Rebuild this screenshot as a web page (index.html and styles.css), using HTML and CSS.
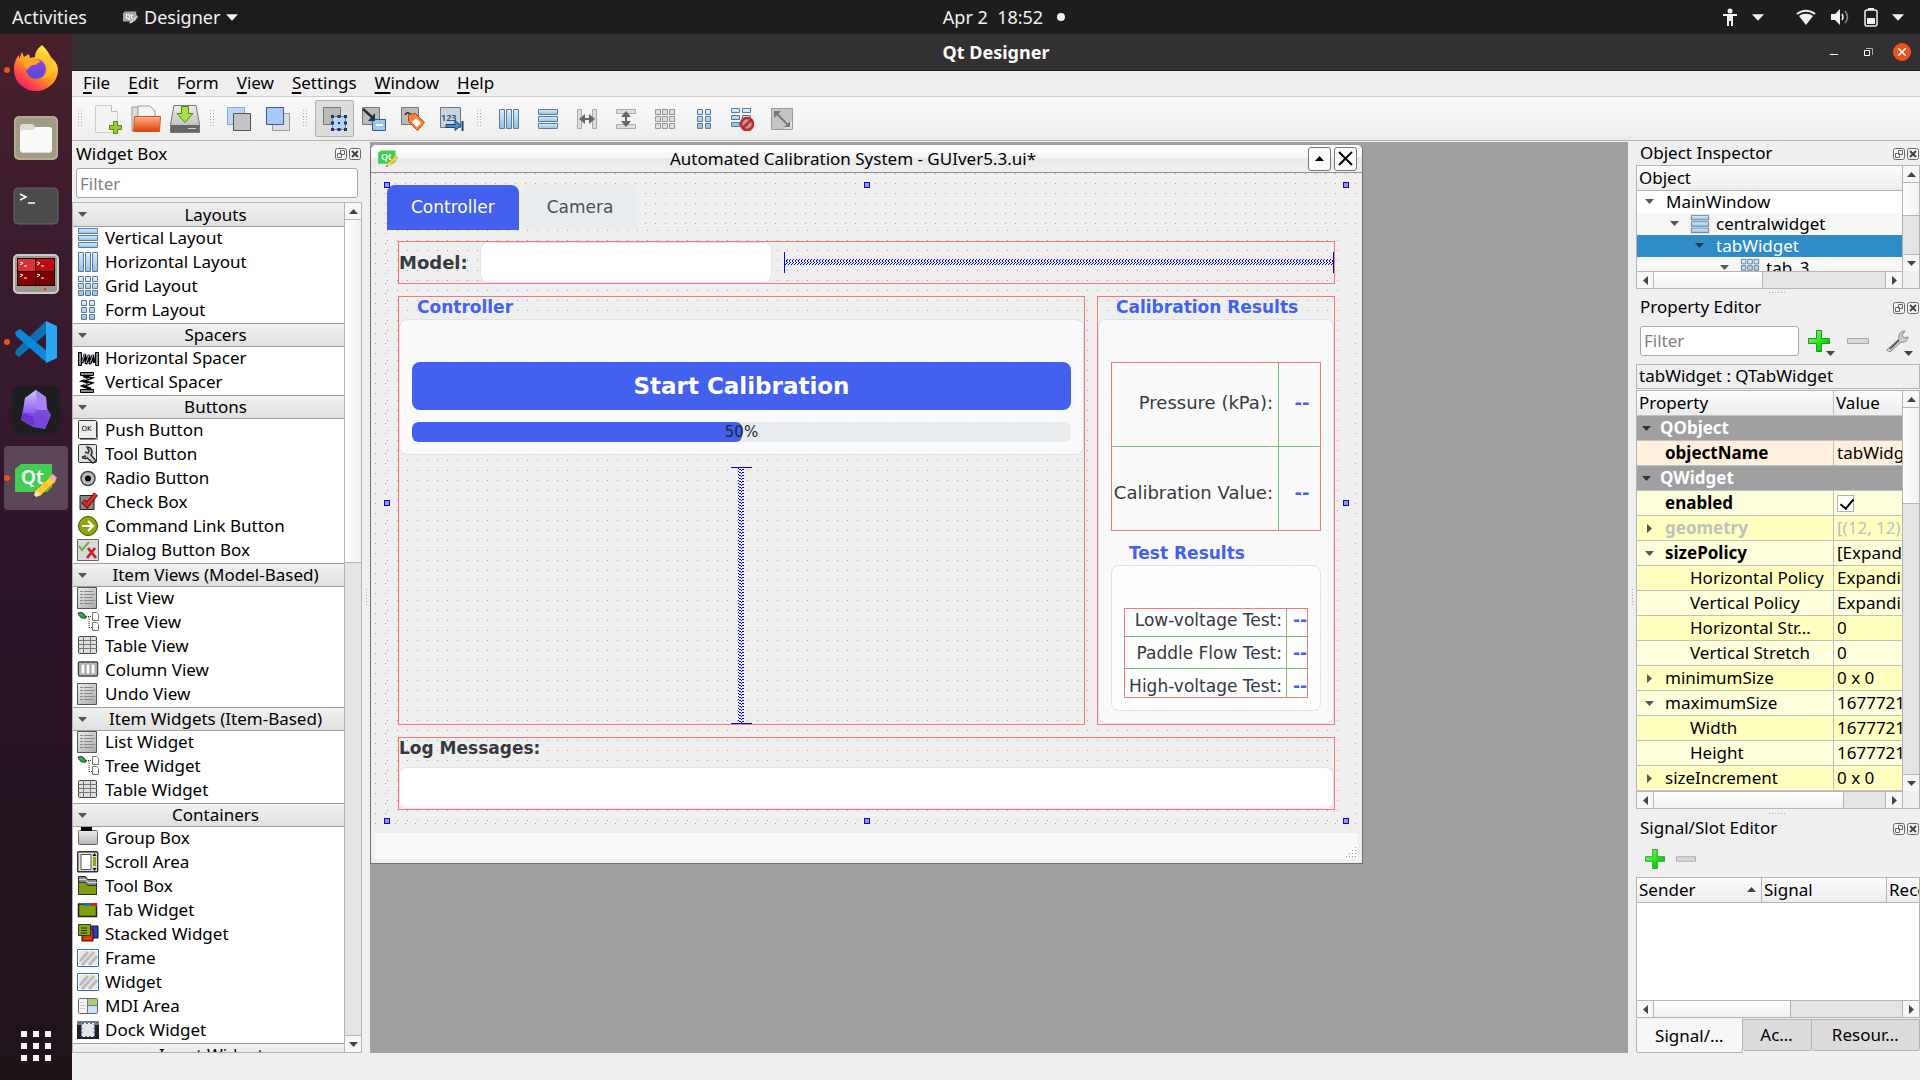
FILE: index.html
```html
<!DOCTYPE html>
<html lang="en">
<head>
<meta charset="utf-8">
<title>Qt Designer</title>
<link rel="stylesheet" href="styles.css">
</head>
<body>
<svg class="paints" aria-hidden="true">
  <defs>
    <linearGradient id="blue" x2="0" y2="1"><stop offset="0" stop-color="#d9efff"/><stop offset="1" stop-color="#8fc0e8"/></linearGradient>
    <linearGradient id="gray" x2="1" y2="1"><stop offset="0" stop-color="#eee"/><stop offset="1" stop-color="#aaa"/></linearGradient>
    <linearGradient id="green" x2="1" y2="1"><stop offset="0" stop-color="#9f9"/><stop offset=".6" stop-color="#1edc14"/><stop offset="1" stop-color="#0b0"/></linearGradient>
    <linearGradient id="orange" x2="0" y2="1"><stop offset="0" stop-color="#ffb08a"/><stop offset="1" stop-color="#e04008"/></linearGradient>
    <linearGradient id="steel" x2="0" y2="1"><stop offset="0" stop-color="#eee"/><stop offset="1" stop-color="#b4b4b4"/></linearGradient>
    <linearGradient id="fox" x2="0" y2="1" x1=".7"><stop offset="0" stop-color="#fff044"/><stop offset=".45" stop-color="#ff9a20"/><stop offset=".75" stop-color="#ff3750"/><stop offset="1" stop-color="#e5127e"/></linearGradient>
    <linearGradient id="globe" x2="0" y2="1"><stop offset="0" stop-color="#a03ee0"/><stop offset="1" stop-color="#4a50d8"/></linearGradient>
    <linearGradient id="gem" x2="0" y2="1"><stop offset="0" stop-color="#d4c2fb"/><stop offset="1" stop-color="#8b5cf6"/></linearGradient>
    <pattern id="coil-h" y="7" width="3" height="6" patternUnits="userSpaceOnUse"><path d="M2 0h1v1h-1zM1 1h1v1h-1zM1 2h1v1h-1zM2 3h1v1h-1zM1 4h1v1h-1zM0 5h1v1h-1z" fill="#00f"/></pattern>
    <pattern id="coil-v" x="7" width="6" height="3" patternUnits="userSpaceOnUse"><path d="M0 0h1v1h-1zM1 1h2v1h-2zM3 2h1v1h-1zM4 1h2v1h-2z" fill="#00f"/></pattern>
  </defs>
</svg>
<svg class="sprite" aria-hidden="true">
  <symbol id="down" viewBox="0 0 9 5"><path d="M0 0h9L4.500 5z" fill="currentColor"/></symbol>
  <symbol id="up" viewBox="0 0 9 5"><path d="M0 5h9L4.500 0z" fill="currentColor"/></symbol>
  <symbol id="left" viewBox="0 0 5 9"><path d="M5 0v9L0 4.500z" fill="currentColor"/></symbol>
  <symbol id="right" viewBox="0 0 5 9"><path d="M0 0v9L5 4.500z" fill="currentColor"/></symbol>
  <symbol id="float" viewBox="0 0 12 12"><rect x=".5" y=".5" width="11" height="11" rx="2" fill="#f6f6f6" stroke="#666"/><path d="M5.500 2.500h4v4h-4zM2.500 5.500h4v4h-4z" fill="#f6f6f6" stroke="#666"/></symbol>
  <symbol id="shut" viewBox="0 0 12 12"><rect x=".5" y=".5" width="11" height="11" rx="2" fill="#f6f6f6" stroke="#666"/><path d="M3 3l6 6M9 3l-6 6" stroke="#444" stroke-width="2"/></symbol>
  <symbol id="vlay" viewBox="0 0 22 22"><g fill="url(#blue)" stroke="#5f7a96"><path d="M1.500 1.500h19v5h-19z"/><path d="M1.500 8.500h19v5h-19z"/><path d="M1.500 15.500h19v5h-19z"/></g></symbol>
  <symbol id="hlay" viewBox="0 0 22 22"><g fill="url(#blue)" stroke="#5f7a96"><path d="M1.500 1.500h5v19h-5z"/><path d="M8.500 1.500h5v19h-5z"/><path d="M15.500 1.500h5v19h-5z"/></g></symbol>
  <symbol id="glay" viewBox="0 0 22 22"><path fill="url(#blue)" stroke="#5f7a96" d="M1.500 1.500h5v5h-5zM8.500 1.500h5v5h-5zM15.500 1.500h5v5h-5zM1.500 8.500h5v5h-5zM8.500 8.500h5v5h-5zM15.500 8.500h5v5h-5zM1.500 15.500h5v5h-5zM8.500 15.500h5v5h-5zM15.500 15.500h5v5h-5z"/></symbol>
  <symbol id="flay" viewBox="0 0 22 22"><path fill="url(#blue)" stroke="#5f7a96" d="M4.500 1.500h5v5h-5zM12.500 1.500h5v5h-5zM4.500 8.500h5v5h-5zM12.500 8.500h5v5h-5zM4.500 15.500h5v5h-5zM12.500 15.500h5v5h-5z"/></symbol>
  <symbol id="hsp" viewBox="0 0 22 22"><path d="M1.500 5.500h3v13h-3zM18.500 5.500h3v13h-3z" fill="#888" stroke="#000"/><path d="M5 16l3-9 1 10 3-9 1 9 3-9 1 8" fill="none" stroke="#000" stroke-width="2.500"/><path d="M5 15l3-8M9 16l3-8M13 16l3-8" stroke="#9bd"/></symbol>
  <symbol id="vsp" viewBox="0 0 22 22"><path d="M3.500 1.500h13v3h-13zM3.500 18.500h13v3h-13z" fill="#888" stroke="#000"/><path d="M6 5l8 2-8 3 8 2-8 3 8 3" fill="none" stroke="#000" stroke-width="2.500"/><path d="M7 9l6-2M7 14l6-2" stroke="#9bd"/></symbol>
  <symbol id="push" viewBox="0 0 22 22"><rect x="1.500" y="1.500" width="18" height="18" rx="1" fill="#eee" stroke="#333"/><path d="M20.500 3v17.500H3" fill="none" stroke="#888"/><text x="4.500" y="12" font-size="7" font-family="DejaVu Sans">OK</text></symbol>
  <symbol id="tool" viewBox="0 0 22 22"><rect x="1.500" y="1.500" width="18" height="18" rx="1" fill="#e4e4e4" stroke="#333"/><path d="M5 14a4 4 0 0 0 5 1l6 5 3-2-5-6a5 5 0 0 0-4-8l2 4-1 2-3-1M5 14l4-1" fill="#ccc" stroke="#333" stroke-width="1.500"/></symbol>
  <symbol id="radio" viewBox="0 0 22 22"><circle cx="11" cy="11.500" r="7" fill="#bbb" stroke="#444" stroke-width="1.500"/><circle cx="11" cy="11.500" r="3" fill="#000"/></symbol>
  <symbol id="check" viewBox="0 0 22 22"><path d="M3 4.500h14v14H3z" fill="#888" stroke="#222"/><path d="M6 10l4 4L19 3" fill="none" stroke="#700" stroke-width="5"/><path d="M6 10l4 4L19 3" fill="none" stroke="#e02a2a" stroke-width="3"/></symbol>
  <symbol id="cmd" viewBox="0 0 22 22"><circle cx="11" cy="11" r="9.500" fill="#8aa80c" stroke="#3d4a05"/><path d="M5 11h10M11 6l5 5-5 5" fill="none" stroke="#fff" stroke-width="2.200"/></symbol>
  <symbol id="dlg" viewBox="0 0 22 22"><path d="M.5.500h21v21H.500z" fill="#d9d9d9" stroke="#666"/><path d="M2 7l3 4 7-8" fill="none" stroke="#5cb531" stroke-width="2"/><path d="M11 9l8 10M18 9l-8 10" stroke="#c8202a" stroke-width="2.800"/></symbol>
  <symbol id="list" viewBox="0 0 22 22"><path d="M.5.500h19v21H.500z" fill="url(#gray)" stroke="#555"/><path d="M3 4.500h3m1 0h9M3 7.500h3m1 0h11M3 10.500h3m1 0h9M3 13.500h3m1 0h11M3 16.500h3m1 0h9" stroke="#888"/></symbol>
  <symbol id="tree" viewBox="0 0 22 22"><path d="M1 2c4-2 7 1 8 5-4 1-7-1-8-5z" fill="#3a9d4c" stroke="#153"/><path d="M9 5.500h6M12 6v11M12 16.500h4" stroke="#333" stroke-dasharray="1 1"/><path d="M15.500 1.500h4l2 2v6h-6zM15.500 11.500h4l2 2v6h-6z" fill="#fff" stroke="#777"/></symbol>
  <symbol id="table" viewBox="0 0 22 22"><rect x="1.500" y="1.500" width="18" height="17" rx="1" fill="#ddd" stroke="#444"/><path d="M1 5.500h19M1 9.500h19M1 13.500h19M6.500 1v18M13.500 1v18" stroke="#777"/></symbol>
  <symbol id="cols" viewBox="0 0 22 22"><rect x="1.500" y="3" width="19" height="14" rx="1" fill="#ccc" stroke="#444" stroke-width="1.500"/><path d="M4 5h4v10H4zM9 5h4v10H9zM14 5h4v10h-4z" fill="#fff" stroke="#777" stroke-width=".7"/></symbol>
  <symbol id="group" viewBox="0 0 22 22"><rect x="1.500" y="3.500" width="19" height="14" rx="1" fill="url(#steel)" stroke="#666"/><path d="M4 0h11v4H4z" fill="#000"/></symbol>
  <symbol id="scroll" viewBox="0 0 22 22"><rect x=".7" y=".7" width="20" height="20" rx="1" fill="#ddd" stroke="#333" stroke-width="1.400"/><path d="M4 3.500h10v15H4z" fill="#fff" stroke="#555"/><path d="M16 6h3v9h-3z" fill="#8aa80c"/><path d="M15.500 5l2-3 2 3zM15.500 17l2 3 2-3z"/></symbol>
  <symbol id="tbox" viewBox="0 0 22 22"><path d="M1.500 19.500v-18h7l2 3h9v15z" fill="#888" stroke="#222"/><path d="M1.500 19.500v-12h7l2 3h9v9z" fill="#7f9f0e" stroke="#333"/><path d="M2 4.500h7l2 3h9" fill="none" stroke="#ddd"/></symbol>
  <symbol id="tabw" viewBox="0 0 22 22"><path d="M1.500 5h18v12.500h-18z" fill="#7f9f0e" stroke="#222" stroke-width="1.500"/><path d="M7 4h6v3H7z" fill="#17c"/><path d="M14 4h6v3h-6z" fill="#d22"/></symbol>
  <symbol id="stack" viewBox="0 0 22 22"><path d="M13 3h8v12h-8z" fill="#24c" stroke="#013"/><path d="M5 6h11v12H5z" fill="#c40" stroke="#400"/><path d="M1.500 1.500h12v11h-12z" fill="#8aa80c" stroke="#333"/><path d="M4 5h6M4 7.500h6M4 10h6" stroke="#230"/></symbol>
  <symbol id="frame" viewBox="0 0 22 22"><path d="M.5 2.500h21v17H.500z" fill="#fff" stroke="#2b71c7"/><path d="M2 4h18v14H2z" fill="#e9e9e9"/><path d="M3 14l8-9M5 18L17 5M12 18l8-9" stroke="#bbb" stroke-width="3"/></symbol>
  <symbol id="mdi" viewBox="0 0 22 22"><rect x="1.500" y="3.500" width="19" height="15" rx="1" fill="#f4f4f4" stroke="#666"/><path d="M11 4h9v6h-9z" fill="#a5d27a"/><path d="M11 11h9v7h-9z" fill="#cfe0f7"/><path d="M10.500 4v14M11 10.500h9" stroke="#777"/><path d="M3 7.500h4M3 10.500h6M3 13.500h5" stroke="#ccc"/></symbol>
  <symbol id="dockw" viewBox="0 0 22 22"><path d="M0 2h22v18H0z" fill="#222"/><path d="M0 2h22v4H0z" fill="#777"/><path d="M5 4.500h12v13H5z" fill="#e5e5e5" stroke="#fff"/><path d="M5 4.500h12v13H5z" fill="none" stroke="#2b71c7" stroke-dasharray="2 2"/></symbol>
  <symbol id="qt" viewBox="0 0 42 36"><path d="M6 1h31v23l-5 5H0V6z" fill="#41cd52"/><text x="6" y="21" font-family="Noto Sans" font-size="19" font-weight="600" fill="#fff">Qt</text><path d="M18 35l3-8 15-14 5 5-15 14z" fill="#fc3" stroke="#b80" stroke-width=".7"/><path d="M34 14l4-3 4 4-3 4z" fill="#e3b4b4"/><path d="M18 35l3-8 5 5z" fill="#f6e3bd"/><path d="M17 36l2-4 2 2z" fill="#333"/></symbol>
  <symbol id="plus" viewBox="0 0 22 22"><path d="M8.500.500h5v8h8v5h-8v8h-5v-8h-8v-5h8z" fill="url(#green)" stroke="#189c18"/></symbol>
  <symbol id="minus" viewBox="0 0 22 22"><path d="M.5 8.500h21v5H.500z" fill="#d8d8d8" stroke="#aaa"/></symbol>
  <symbol id="wrench" viewBox="0 0 24 24"><path d="M1.500 21L14 10c-1-5 2-8 6-8l-3 4 2 3 4-1c0 4-4 6-7 5L5 23z" fill="#ccc" stroke="#888"/><path d="M5 20L14 11" stroke="#444" stroke-width="1.500"/></symbol>
  <symbol id="new" viewBox="0 0 30 30"><path d="M3.500 1.500h16l6 6v21h-22z" fill="#f3f3f3" stroke="#ccc"/><path d="M19.500 1.500v6h6" fill="#fff" stroke="#bbb"/><path d="M21.500 17.500h4v4h4v4h-4v4h-4v-4h-4v-4h4z" fill="#9c3" stroke="#4e8a06"/></symbol>
  <symbol id="open" viewBox="0 0 30 30"><path d="M1 27V3h8l2 4h12v20z" fill="#ddd" stroke="#999"/><path d="M7 14V2h12l5 5v7z" fill="#f5f5f5" stroke="#999"/><path d="M3.500 12.500h26l-1 15h-26z" fill="url(#orange)" stroke="#d4571f"/></symbol>
  <symbol id="save" viewBox="0 0 30 30"><path d="M4 1.500h22l3.500 19v8h-29v-8z" fill="url(#steel)" stroke="#777"/><path d="M1 21h28v7H1z" fill="#666"/><path d="M18 24.500h8" stroke="#ccc"/><path d="M11.500 2.500h7v7h4.500l-8 9-8-9h4.500z" fill="#a6e04a" stroke="#4e8a06"/></symbol>
  <symbol id="back" viewBox="0 0 24 24"><path d="M.5.500h17v17H.500z" fill="#bfd6fb" stroke="#8ba2cc"/><path d="M6.500 6.500h17v17h-17z" fill="#c4c4c4" stroke="#555"/></symbol>
  <symbol id="front" viewBox="0 0 24 24"><path d="M6.500 6.500h17v17h-17z" fill="#ddd" stroke="#999"/><path d="M.5.500h17v17H.500z" fill="#a6c9fa" stroke="#3d5a90"/></symbol>
  <symbol id="editw" viewBox="0 0 24 24"><path d="M.5.500h17v17H.500z" fill="#bbb" stroke="#777"/><path d="M9.500 9.500h13v13h-13z" fill="#b9d4fb" stroke="#6c8ab8"/><path d="M8 8h3v3H8zM14.500 8h3v3h-3zM21 8h3v3h-3zM8 14.500h3v3H8zM21 14.500h3v3h-3zM8 21h3v3H8zM14.500 21h3v3h-3zM21 21h3v3h-3zM15 15h2v2h-2z" fill="#1d3557"/></symbol>
  <symbol id="sig" viewBox="0 0 24 24"><path d="M.5.500h17v17H.500z" fill="#bbb" stroke="#777"/><path d="M10.500 12.500h13v11h-13z" fill="#9fc4f8" stroke="#3d5a90"/><path d="M14 17h7v2h-7z" fill="#fff"/><path d="M1 2l10 9" stroke="#234" stroke-width="2.500"/><path d="M13 6v8H6z" fill="#234"/></symbol>
  <symbol id="buddy" viewBox="0 0 24 24"><path d="M.5.500h17v17H.500z" fill="#bbb" stroke="#777"/><path d="M4 8c2-4 5-2 7 1" fill="none" stroke="#222" stroke-width="1.500"/><path d="M7.500 7.500l7-1 9 9-7 8-9-9z" fill="#f5843a" stroke="#a4480f"/><path d="M15 11l5 5-4 4-5-5z" fill="#fff"/></symbol>
  <symbol id="tabo" viewBox="0 0 24 24"><path d="M.5.500h20v20H.500z" fill="#ccd3dc" stroke="#678"/><text x="1" y="14" font-family="Noto Sans" font-size="9" font-weight="600" fill="#1d4f91">123</text><path d="M6 17.500h9v-4l6 5-6 5v-3H6z" fill="#4f8ad0" stroke="#1d3f70"/><path d="M22.500 14v10" stroke="#1d3f70" stroke-width="2"/></symbol>
  <symbol id="hsplit" viewBox="0 0 22 22"><path d="M1.500 1.500h4v19h-4zM16.500 1.500h4v19h-4z" fill="#ddd" stroke="#aaa"/><path d="M3 11l6-5v4h4V6l6 5-6 5v-4H9v4z" fill="#666"/></symbol>
  <symbol id="vsplit" viewBox="0 0 22 22"><path d="M1.500 1.500h19v4h-19zM1.500 16.500h19v4h-19z" fill="#ddd" stroke="#aaa"/><path d="M11 3l5 6h-4v4h4l-5 6-5-6h4V9H6z" fill="#666"/></symbol>
  <symbol id="ggray" viewBox="0 0 22 22"><path fill="#ddd" stroke="#999" d="M1.500 1.500h5v5h-5zM8.500 1.500h5v5h-5zM15.500 1.500h5v5h-5zM1.500 8.500h5v5h-5zM8.500 8.500h5v5h-5zM15.500 8.500h5v5h-5zM1.500 15.500h5v5h-5zM8.500 15.500h5v5h-5zM15.500 15.500h5v5h-5z"/></symbol>
  <symbol id="break" viewBox="0 0 24 24"><path d="M.5 1.500h8v4h-8zM11.500 1.500h8v4h-8zM.5 8.500h8v4h-8zM11.500 8.500h8v4h-8zM.5 15.500h8v4h-8z" fill="url(#blue)" stroke="#5f7a96"/><circle cx="16" cy="17" r="6" fill="#b99" stroke="#c1272d" stroke-width="2.500"/><path d="M12 21l8-8" stroke="#c1272d" stroke-width="2.500"/></symbol>
  <symbol id="adjust" viewBox="0 0 22 22"><path d="M.5.500h21v21H.500z" fill="#c4c4c4" stroke="#999"/><path d="M14 13h7v8h-7z" fill="#ddd"/><path d="M5 5l13 13" stroke="#777" stroke-width="2"/><path d="M3 3h7l-7 7zM19 19h-6l6-6z" fill="#777"/></symbol>
</svg>

<div class="desktop">
  <header class="topbar">
    <nav class="topbar-left">
      <button>Activities</button>
      <button class="app-menu"><svg class="mono" width="15" height="13"><use href="#qt"/></svg>Designer<svg class="caret" width="12" height="7"><use href="#down"/></svg></button>
    </nav>
    <button class="clock"><time>Apr 2&nbsp; 18:52</time><span class="notice"></span></button>
    <div class="tray">
      <svg width="16" height="18" viewBox="0 0 16 18"><circle cx="8" cy="3" r="2.500" fill="#f2f2f2"/><path d="M1 6h14v2h-4v10H9v-5H7v5H5V8H1z" fill="#f2f2f2"/></svg>
      <svg class="caret first" width="12" height="7"><use href="#down"/></svg>
      <svg width="20" height="16" viewBox="0 0 20 16"><path d="M1 5a14 14 0 0 1 18 0" fill="none" stroke="#f2f2f2" stroke-width="2"/><path d="M3 7c4-3 10-3 14 0l-7 9z" fill="#f2f2f2"/></svg>
      <svg width="20" height="18" viewBox="0 0 20 18"><path d="M1 6h4l5-5v16l-5-5H1z" fill="#f2f2f2"/><path d="M12 6q2 3 0 6" fill="none" stroke="#f2f2f2" stroke-width="1.500"/><path d="M15 3q5 6 0 12" fill="none" stroke="#888" stroke-width="1.500"/></svg>
      <svg width="14" height="19" viewBox="0 0 14 19"><rect x="1" y="2" width="12" height="16" rx="2" fill="none" stroke="#f2f2f2" stroke-width="1.500"/><path d="M4 0h6v2H4zM3 10h8v6H3z" fill="#f2f2f2"/></svg>
      <svg class="caret" width="12" height="7"><use href="#down"/></svg>
    </div>
  </header>

  <aside class="launcher">
    <button class="running" aria-label="Firefox"><svg class="raised" width="46" height="46" viewBox="0 0 46 46"><path d="M29 0c5 5 8 9 9 13 5 3 7 8 7 12a22 21 0 0 1-44 0C1 18 3 13 6 10v4l3-7 2 5 5-3 1 4 5-1c0-5 3-9 7-12z" fill="url(#fox)"/><circle cx="23" cy="24" r="10" fill="url(#globe)"/><path d="M6 14c4-2 8-1 11 2 4-3 9-2 11 1-4 0-3 3-7 3-3 0-5 2-7 5-2-4-5-7-8-11z" fill="#ffa523"/><path d="M31 12c7 7 4 18-2 22 9-1 14-9 12-18-2-5-8-8-10-4z" fill="#ffc52e" opacity=".7"/></svg></button>
    <button aria-label="Files"><svg width="46" height="46" viewBox="0 0 46 46"><rect x="1" y="1" width="44" height="44" rx="5" fill="#a19a84"/><rect x="2" y="2" width="42" height="42" rx="4" fill="none" stroke="#c1bba8"/><path d="M7 34V12q0-3 3-3h8q3 0 4 3h14q3 0 3 3v19q0 4-3 4H10q-3 0-3-4z" fill="#dfdccf"/><path d="M7 18q0-3 3-3h10l3-3h13q3 0 3 3v19q0 3-3 3H10q-3 0-3-3z" fill="#fafafa"/></svg></button>
    <button aria-label="Terminal"><svg width="46" height="38" viewBox="0 0 46 38"><rect x="1" y="1" width="44" height="36" rx="4" fill="#4b4b4b" stroke="#666"/><path d="M7 7l6 3-6 3M15 16h7" fill="none" stroke="#fff" stroke-width="1.500"/></svg></button>
    <button aria-label="Terminator"><svg width="46" height="40" viewBox="0 0 46 40"><rect x="1" y="1" width="44" height="38" rx="4" fill="#999b93" stroke="#cdcec9" stroke-width="2"/><path d="M4 4h38v28H4z" fill="#200"/><path d="M5 5h17v12H5z" fill="#d83333"/><path d="M23 5h18v12H23z" fill="#c00a10"/><path d="M5 18h17v13H5z" fill="#8b0000"/><path d="M23 18h18v13H23z" fill="#780000"/><path d="M7 8l3 1-3 2M24 8l3 1-3 2M7 20l3 1-3 2M24 20l3 1-3 2M11 12h3M28 12h3M11 24h3M28 24h3" fill="none" stroke="#fff"/><circle cx="32" cy="35" r="1" fill="red"/></svg></button>
    <button class="running" aria-label="Visual Studio Code"><svg width="44" height="44" viewBox="0 0 44 44"><path d="M32 1L7 25l-5 5-1 4 4 3L33 13z" fill="#0f6fb3"/><path d="M1 12l5-3 27 22v12L2 16z" fill="#0c88d8"/><path d="M32 1l11 5v32l-11 5z" fill="#2aa7f2"/></svg></button>
    <button aria-label="Obsidian"><svg width="48" height="48" viewBox="0 0 48 48"><rect width="48" height="48" rx="9" fill="#1e1e1e"/><path d="M24 4l10 7 1 11 4 7-6 14-12-2-12-7 4-22z" fill="#7c4ddb"/><path d="M24 4l-11 8-2 15 12 0 4-9z" fill="url(#gem)"/><path d="M24 4l10 7 1 13-10 0z" fill="#a782f3"/><path d="M9 32l3-5 10 4 1 9-8-2z" fill="#6a35cc"/><path d="M23 27h12l4 2-6 14-10-3z" fill="#7548d8"/></svg></button>
    <button class="running active" aria-label="Qt Designer"><svg width="42" height="36"><use href="#qt"/></svg></button>
    <button class="apps" aria-label="Show Applications"><svg width="30" height="30" viewBox="0 0 30 30"><path d="M0 0h6v6H0zM12 0h6v6h-6zM24 0h6v6h-6zM0 12h6v6H0zM12 12h6v6h-6zM24 12h6v6h-6zM0 24h6v6H0zM12 24h6v6h-6zM24 24h6v6h-6z" fill="#f5f5f5"/></svg></button>
  </aside>

  <main class="app">
    <div class="titlebar">
      <h1>Qt Designer</h1>
      <div class="window-buttons">
        <button aria-label="Minimize"><svg width="8" height="12" viewBox="0 0 8 12"><path d="M0 8.500h8" stroke="#fff"/></svg></button>
        <button aria-label="Restore"><svg width="9" height="9" viewBox="0 0 9 9"><path d="M.5 2.500h5v5h-5z" fill="none" stroke="#fff"/><path d="M2 .5h6.500V7" fill="none" stroke="#aaa"/></svg></button>
        <button class="quit" aria-label="Close"><svg width="8" height="8" viewBox="0 0 8 8"><path d="M0 0l8 8M8 0L0 8" stroke="#fff" stroke-width="1.500"/></svg></button>
      </div>
    </div>
    <nav class="menubar">
      <button><u>F</u>ile</button><button><u>E</u>dit</button><button>F<u>o</u>rm</button><button><u>V</u>iew</button><button><u>S</u>ettings</button><button><u>W</u>indow</button><button><u>H</u>elp</button>
    </nav>
    <div class="toolbar">
      <i class="grip"></i>
      <button aria-label="New"><svg width="30" height="30"><use href="#new"/></svg></button>
      <button aria-label="Open"><svg width="30" height="30"><use href="#open"/></svg></button>
      <button aria-label="Save"><svg width="30" height="30"><use href="#save"/></svg></button>
      <i class="grip"></i>
      <button aria-label="Send to Back"><svg width="24" height="24"><use href="#back"/></svg></button>
      <button aria-label="Bring to Front"><svg width="24" height="24"><use href="#front"/></svg></button>
      <i class="grip wide"></i>
      <button class="pressed" aria-label="Edit Widgets"><svg width="24" height="24"><use href="#editw"/></svg></button>
      <button aria-label="Edit Signals/Slots"><svg width="24" height="24"><use href="#sig"/></svg></button>
      <button aria-label="Edit Buddies"><svg width="24" height="24"><use href="#buddy"/></svg></button>
      <button aria-label="Edit Tab Order"><svg width="24" height="24"><use href="#tabo"/></svg></button>
      <i class="grip wide"></i>
      <button aria-label="Lay Out Horizontally"><svg width="22" height="22"><use href="#hlay"/></svg></button>
      <button aria-label="Lay Out Vertically"><svg width="22" height="22"><use href="#vlay"/></svg></button>
      <button aria-label="Horizontal Splitter"><svg width="22" height="22"><use href="#hsplit"/></svg></button>
      <button aria-label="Vertical Splitter"><svg width="22" height="22"><use href="#vsplit"/></svg></button>
      <button aria-label="Lay Out in a Grid"><svg width="22" height="22"><use href="#ggray"/></svg></button>
      <button aria-label="Lay Out in a Form"><svg width="22" height="22"><use href="#flay"/></svg></button>
      <button aria-label="Break Layout"><svg width="24" height="24"><use href="#break"/></svg></button>
      <button aria-label="Adjust Size"><svg width="22" height="22"><use href="#adjust"/></svg></button>
    </div>

    <div class="workspace">
      <section class="widget-box">
        <div class="dock-title"><h2>Widget Box</h2><button aria-label="Float"><svg width="12" height="12"><use href="#float"/></svg></button><button aria-label="Close"><svg width="12" height="12"><use href="#shut"/></svg></button></div>
        <input class="filter" type="text" placeholder="Filter" aria-label="Filter widgets">
        <div class="widget-tree">
          <div class="widget-list">
            <button class="category"><svg width="9" height="5"><use href="#down"/></svg><span>Layouts</span></button>
            <ul>
              <li><svg><use href="#vlay"/></svg>Vertical Layout</li>
              <li><svg><use href="#hlay"/></svg>Horizontal Layout</li>
              <li><svg><use href="#glay"/></svg>Grid Layout</li>
              <li><svg><use href="#flay"/></svg>Form Layout</li>
            </ul>
            <button class="category"><svg width="9" height="5"><use href="#down"/></svg><span>Spacers</span></button>
            <ul>
              <li><svg><use href="#hsp"/></svg>Horizontal Spacer</li>
              <li><svg><use href="#vsp"/></svg>Vertical Spacer</li>
            </ul>
            <button class="category"><svg width="9" height="5"><use href="#down"/></svg><span>Buttons</span></button>
            <ul>
              <li><svg><use href="#push"/></svg>Push Button</li>
              <li><svg><use href="#tool"/></svg>Tool Button</li>
              <li><svg><use href="#radio"/></svg>Radio Button</li>
              <li><svg><use href="#check"/></svg>Check Box</li>
              <li><svg><use href="#cmd"/></svg>Command Link Button</li>
              <li><svg><use href="#dlg"/></svg>Dialog Button Box</li>
            </ul>
            <button class="category"><svg width="9" height="5"><use href="#down"/></svg><span>Item Views (Model-Based)</span></button>
            <ul>
              <li><svg><use href="#list"/></svg>List View</li>
              <li><svg><use href="#tree"/></svg>Tree View</li>
              <li><svg><use href="#table"/></svg>Table View</li>
              <li><svg><use href="#cols"/></svg>Column View</li>
              <li><svg><use href="#list"/></svg>Undo View</li>
            </ul>
            <button class="category"><svg width="9" height="5"><use href="#down"/></svg><span>Item Widgets (Item-Based)</span></button>
            <ul>
              <li><svg><use href="#list"/></svg>List Widget</li>
              <li><svg><use href="#tree"/></svg>Tree Widget</li>
              <li><svg><use href="#table"/></svg>Table Widget</li>
            </ul>
            <button class="category"><svg width="9" height="5"><use href="#down"/></svg><span>Containers</span></button>
            <ul>
              <li><svg><use href="#group"/></svg>Group Box</li>
              <li><svg><use href="#scroll"/></svg>Scroll Area</li>
              <li><svg><use href="#tbox"/></svg>Tool Box</li>
              <li><svg><use href="#tabw"/></svg>Tab Widget</li>
              <li><svg><use href="#stack"/></svg>Stacked Widget</li>
              <li><svg><use href="#frame"/></svg>Frame</li>
              <li><svg><use href="#frame"/></svg>Widget</li>
              <li><svg><use href="#mdi"/></svg>MDI Area</li>
              <li><svg><use href="#dockw"/></svg>Dock Widget</li>
            </ul>
            <button class="category"><svg width="9" height="5"><use href="#down"/></svg><span>Input Widgets</span></button>
          </div>
          <div class="vscroll"><button aria-label="Scroll up"><svg width="9" height="5"><use href="#up"/></svg></button><div class="thumb" style="flex-grow:42"></div><div class="track" style="flex-grow:58"></div><button aria-label="Scroll down"><svg width="9" height="5"><use href="#down"/></svg></button></div>
        </div>
      </section>

      <div class="splitter"><i></i></div>

      <section class="canvas">
        <article class="form-window">
          <div class="form-title">
            <svg width="20" height="17"><use href="#qt"/></svg>
            <h2>Automated Calibration System - GUIver5.3.ui*</h2>
            <button aria-label="Shade"><svg width="9" height="5"><use href="#up"/></svg></button>
            <button aria-label="Close form"><svg width="15" height="15" viewBox="0 0 15 15"><path d="M1 1l13 13M14 1L1 14" stroke="#000" stroke-width="2"/></svg></button>
          </div>
          <div class="form-body dots">
            <div class="tab-widget">
              <div class="tabs"><button class="current">Controller</button><button>Camera</button></div>
              <div class="page dots">
                <div class="layout model-row">
                  <label for="model">Model:</label>
                  <input id="model" type="text">
                  <svg class="hspacer" height="21"><rect y="7" width="100%" height="6" fill="url(#coil-h)"/></svg>
                </div>
                <div class="columns">
                  <div class="layout left-col">
                    <h3>Controller</h3>
                    <div class="box control-box">
                      <button class="start">Start Calibration</button>
                      <div class="progress"><progress max="100" value="50" aria-label="Progress"></progress><span>50%</span></div>
                    </div>
                    <svg class="vspacer" width="21"><rect x="7" width="6" height="100%" fill="url(#coil-v)"/></svg>
                  </div>
                  <div class="layout right-col">
                    <h3>Calibration Results</h3>
                    <div class="box results-box">
                      <table class="grid values">
                        <tr><th scope="row">Pressure (kPa):</th><td>--</td></tr>
                        <tr><th scope="row">Calibration Value:</th><td>--</td></tr>
                      </table>
                      <h3>Test Results</h3>
                      <div class="box tests-box">
                        <table class="grid tests">
                          <tr><th scope="row">Low-voltage Test:</th><td>--</td></tr>
                          <tr><th scope="row">Paddle Flow Test:</th><td>--</td></tr>
                          <tr><th scope="row">High-voltage Test:</th><td>--</td></tr>
                        </table>
                      </div>
                    </div>
                  </div>
                </div>
                <div class="layout log-row">
                  <label for="log">Log Messages:</label>
                  <textarea id="log"></textarea>
                </div>
              </div>
              <i class="handle top start-x"></i><i class="handle top mid-x"></i><i class="handle top end-x"></i>
              <i class="handle mid-y start-x"></i><i class="handle mid-y end-x"></i>
              <i class="handle bottom start-x"></i><i class="handle bottom mid-x"></i><i class="handle bottom end-x"></i>
            </div>
          </div>
          <footer class="form-status"><svg width="10" height="10" viewBox="0 0 10 10"><path d="M9 0h1v1H9zM6 3h1v1H6zM9 3h1v1H9zM3 6h1v1H3zM6 6h1v1H6zM9 6h1v1H9zM0 9h1v1H0zM3 9h1v1H3zM6 9h1v1H6zM9 9h1v1H9z" fill="#999"/></svg></footer>
        </article>
      </section>

      <div class="splitter"><i></i></div>

      <div class="side">
        <section class="inspector">
          <div class="dock-title"><h2>Object Inspector</h2><button aria-label="Float"><svg width="12" height="12"><use href="#float"/></svg></button><button aria-label="Close"><svg width="12" height="12"><use href="#shut"/></svg></button></div>
          <div class="scroll-frame">
            <div class="view">
              <div class="column-head">Object</div>
              <ul class="object-tree">
                <li class="level-1"><svg class="arrow" width="9" height="5"><use href="#down"/></svg>MainWindow</li>
                <li class="level-2"><svg class="arrow" width="9" height="5"><use href="#down"/></svg><svg class="icon" width="20" height="20"><use href="#vlay"/></svg>centralwidget</li>
                <li class="level-3"><svg class="arrow" width="9" height="5"><use href="#down"/></svg>tabWidget</li>
                <li class="level-4"><svg class="arrow" width="9" height="5"><use href="#down"/></svg><svg class="icon" width="20" height="20"><use href="#glay"/></svg>tab_3</li>
              </ul>
            </div>
            <div class="vscroll"><button aria-label="Scroll up"><svg width="9" height="5"><use href="#up"/></svg></button><div class="thumb" style="flex-grow:46"></div><div class="track" style="flex-grow:54"></div><button aria-label="Scroll down"><svg width="9" height="5"><use href="#down"/></svg></button></div>
            <div class="hscroll"><button aria-label="Scroll left"><svg width="5" height="9"><use href="#left"/></svg></button><div class="thumb" style="flex-grow:47"></div><div class="track" style="flex-grow:53"></div><button aria-label="Scroll right"><svg width="5" height="9"><use href="#right"/></svg></button></div>
          </div>
        </section>
        <div class="row-splitter"><i></i></div>
        <section class="properties">
          <div class="dock-title"><h2>Property Editor</h2><button aria-label="Float"><svg width="12" height="12"><use href="#float"/></svg></button><button aria-label="Close"><svg width="12" height="12"><use href="#shut"/></svg></button></div>
          <div class="property-tools">
            <input class="filter" type="text" placeholder="Filter" aria-label="Filter properties">
            <button aria-label="Add property"><svg width="22" height="22"><use href="#plus"/></svg><svg class="menu-arrow" width="9" height="5"><use href="#down"/></svg></button>
            <button aria-label="Remove property"><svg width="22" height="22"><use href="#minus"/></svg></button>
            <button aria-label="Configure"><svg width="24" height="24"><use href="#wrench"/></svg><svg class="menu-arrow" width="9" height="5"><use href="#down"/></svg></button>
          </div>
          <div class="object-label">tabWidget : QTabWidget</div>
          <div class="scroll-frame">
            <div class="view">
              <table class="property-table">
                <colgroup><col class="name-col"><col></colgroup>
                <thead><tr><th>Property</th><th>Value</th></tr></thead>
                <tbody>
                  <tr class="class-row"><th colspan="2"><svg width="9" height="5"><use href="#down"/></svg>QObject</th></tr>
                  <tr class="peach"><th class="changed">objectName</th><td>tabWidget</td></tr>
                  <tr class="class-row"><th colspan="2"><svg width="9" height="5"><use href="#down"/></svg>QWidget</th></tr>
                  <tr><th class="changed">enabled</th><td><input type="checkbox" checked aria-label="enabled"></td></tr>
                  <tr class="alt off"><th class="changed"><svg class="closed" width="5" height="9"><use href="#right"/></svg>geometry</th><td>[(12, 12), 960 x 636]</td></tr>
                  <tr><th class="changed"><svg width="9" height="5"><use href="#down"/></svg>sizePolicy</th><td>[Expanding, Expanding]</td></tr>
                  <tr class="alt"><th class="sub">Horizontal Policy</th><td>Expanding</td></tr>
                  <tr><th class="sub">Vertical Policy</th><td>Expanding</td></tr>
                  <tr class="alt"><th class="sub">Horizontal Str…</th><td>0</td></tr>
                  <tr><th class="sub">Vertical Stretch</th><td>0</td></tr>
                  <tr class="alt"><th><svg class="closed" width="5" height="9"><use href="#right"/></svg>minimumSize</th><td>0 x 0</td></tr>
                  <tr><th><svg width="9" height="5"><use href="#down"/></svg>maximumSize</th><td>16777215 x 16777215</td></tr>
                  <tr class="alt"><th class="sub">Width</th><td>16777215</td></tr>
                  <tr><th class="sub">Height</th><td>16777215</td></tr>
                  <tr class="alt"><th><svg class="closed" width="5" height="9"><use href="#right"/></svg>sizeIncrement</th><td>0 x 0</td></tr>
                </tbody>
              </table>
            </div>
            <div class="vscroll"><button aria-label="Scroll up"><svg width="9" height="5"><use href="#up"/></svg></button><div class="thumb" style="flex-grow:26"></div><div class="track" style="flex-grow:74"></div><button aria-label="Scroll down"><svg width="9" height="5"><use href="#down"/></svg></button></div>
            <div class="hscroll"><button aria-label="Scroll left"><svg width="5" height="9"><use href="#left"/></svg></button><div class="thumb" style="flex-grow:82"></div><div class="track" style="flex-grow:18"></div><button aria-label="Scroll right"><svg width="5" height="9"><use href="#right"/></svg></button></div>
          </div>
        </section>
        <div class="row-splitter"><i></i></div>
        <section class="signals">
          <div class="dock-title"><h2>Signal/Slot Editor</h2><button aria-label="Float"><svg width="12" height="12"><use href="#float"/></svg></button><button aria-label="Close"><svg width="12" height="12"><use href="#shut"/></svg></button></div>
          <div class="signal-tools">
            <button aria-label="Add connection"><svg width="20" height="20"><use href="#plus"/></svg></button>
            <button aria-label="Remove connection"><svg width="20" height="20"><use href="#minus"/></svg></button>
          </div>
          <div class="signal-frame">
            <table class="signal-table"><thead><tr><th><span>Sender</span><svg width="9" height="5"><use href="#up"/></svg></th><th>Signal</th><th>Receiver</th></tr></thead></table>
            <div class="hscroll"><button aria-label="Scroll left"><svg width="5" height="9"><use href="#left"/></svg></button><div class="thumb" style="flex-grow:55"></div><div class="track" style="flex-grow:45"></div><button aria-label="Scroll right"><svg width="5" height="9"><use href="#right"/></svg></button></div>
          </div>
          <div class="dock-tabs"><button class="current">Signal/…</button><button>Ac…</button><button>Resour…</button></div>
        </section>
      </div>
    </div>
    <footer class="statusbar"></footer>
  </main>
</div>
</body>
</html>
```
FILE: styles.css
```css
* { box-sizing: border-box; }
body {
  margin: 0;
  font: 17px/24px "Noto Sans", "Open Sans", sans-serif;
  color: #000;
  background: #efefef;
}
button {
  display: flex;
  align-items: center;
  justify-content: center;
  padding: 0;
  border: 0;
  background: none;
  font: inherit;
  color: inherit;
}
ul { margin: 0; padding: 0; list-style: none; }
h1, h2, h3 { margin: 0; font-size: 17px; }
h1 { font-size: 18px; }
h2 { font-weight: 400; }
svg { display: block; flex: none; }
.paints { position: absolute; width: 0; height: 0; }
.sprite { display: none; }

.desktop {
  display: grid;
  grid-template: 34px minmax(0, 1fr) / 72px minmax(0, 1fr);
  height: 100vh;
  overflow: hidden;
}

/* GNOME top bar */
.topbar {
  grid-column: 1 / -1;
  display: grid;
  grid-template-columns: 1fr auto 1fr;
  align-items: center;
  padding: 0 16px 0 12px;
  background: #1d1d1d;
  color: #f2f2f2;
  font-size: 18px;
}
.topbar-left { display: flex; gap: 36px; }
.app-menu { gap: 6px; }
.mono { filter: grayscale(1); }
.caret { color: #f2f2f2; }
.clock { gap: 14px; padding-left: 92px; }
.notice { width: 8px; height: 8px; border-radius: 50%; background: #f2f2f2; }
.tray { display: flex; align-items: center; justify-content: flex-end; gap: 14px; }
.tray .first { margin-right: 18px; }

/* launcher */
.launcher {
  display: flex;
  flex-direction: column;
  padding: 2px 4px 0;
  background: linear-gradient(#48202a, #3c1c2e 18%, #2e152b 50%, #24141f 80%, #1f131a);
}
.launcher button { position: relative; height: 64px; margin: 2px 0; border-radius: 4px; }
.launcher .active { padding-top: 6px; background: #5b4658; }
.launcher .raised { margin-bottom: 4px; }
.launcher .running::before {
  content: "";
  position: absolute;
  left: 0;
  top: 29px;
  width: 6px;
  height: 6px;
  border-radius: 50%;
  background: #e95420;
}
.launcher .apps { margin-top: auto; }

/* application frame */
.app { display: flex; flex-direction: column; background: #efefef; min-height: 0; }
.titlebar {
  position: relative;
  display: flex;
  align-items: center;
  justify-content: center;
  flex: none;
  height: 37px;
  border-bottom: 1px solid #1c1a1b;
  background: #333031;
  color: #fff;
}
.window-buttons { position: absolute; right: 9px; display: flex; gap: 16px; }
.window-buttons button { width: 18px; height: 18px; border-radius: 50%; }
.window-buttons .quit { background: #e95420; }
.menubar {
  display: flex;
  gap: 18px;
  flex: none;
  height: 26px;
  padding: 0 0 1px 11px;
  border-bottom: 1px solid #ccc;
}
.menubar u { text-decoration-thickness: 2px; text-underline-offset: 3px; }
.toolbar {
  display: flex;
  align-items: center;
  flex: none;
  height: 44px;
  border-bottom: 1px solid #b4b4b4;
  background: linear-gradient(#fafafa, #ededed);
}
.toolbar button { width: 39px; height: 37px; }
.toolbar .pressed { border: 1px solid #b0b0b0; border-radius: 2px; background: #dcdcdc; }
.grip {
  width: 15px;
  height: 17px;
  padding: 0 4px 0 6px;
  background: conic-gradient(from 270deg at 1px 1px, #aaa 90deg, transparent 0) content-box 6px 0 / 3px 3px;
}
.grip.wide { width: 18px; padding-right: 7px; }
.workspace { flex: 1; display: flex; min-height: 0; padding-top: 1px; }
.statusbar { flex: none; height: 27px; }

.dock-title { display: flex; align-items: center; gap: 2px; flex: none; height: 23px; padding: 0 1px 0 4px; }
.dock-title h2 { flex: 1; padding-bottom: 1px; line-height: 22px; }
.filter {
  height: 30px;
  min-width: 0;
  padding: 0 3px;
  border: 1px solid #a8a8a8;
  border-radius: 3px;
  background: #fff;
  font: inherit;
}
.filter::placeholder { color: #808080; }

/* scroll bars */
.vscroll, .hscroll { display: flex; background: #e4e4e4; color: #444; }
.vscroll { flex: none; flex-direction: column; width: 17px; border-left: 1px solid #b4b4b4; }
.hscroll { height: 17px; border-top: 1px solid #b4b4b4; }
.vscroll button { flex: none; height: 16px; background: #f7f7f7; }
.hscroll button { flex: none; width: 16px; background: #f7f7f7; }
.thumb, .track { flex-basis: 0; }
.vscroll .thumb { border: solid #b4b4b4; border-width: 1px 0; background: linear-gradient(90deg, #fff, #f0f0f0); }
.hscroll .thumb { border: solid #b4b4b4; border-width: 0 1px; background: linear-gradient(#fff, #f0f0f0); }
.vscroll .track { border-bottom: 1px solid #b4b4b4; }
.hscroll .track { border-right: 1px solid #b4b4b4; }
.scroll-frame {
  display: grid;
  grid-template: minmax(0, 1fr) 17px / minmax(0, 1fr) 17px;
  border: 1px solid #b4b4b4;
}
.scroll-frame .view { overflow: hidden; background: #fff; }
.scroll-frame .hscroll { border-right: 1px solid #b4b4b4; margin-right: -1px; }

/* widget box */
.widget-box { display: flex; flex-direction: column; flex: none; width: 290px; }
.widget-box .dock-title { height: 24px; }
.widget-box .filter { margin: 2px 4px 4px; }
.widget-tree { display: flex; flex: 1; min-height: 0; border: 1px solid #b4b4b4; background: #fff; }
.widget-list { flex: 1; overflow: hidden; }
.category {
  width: 100%;
  height: 24px;
  padding: 0 0 0 5px;
  border: solid #a0a0a0;
  border-width: 1px 0;
  background: linear-gradient(#f0f0f0, #e0e0e0);
  color: #555;
}
.category:first-child { border-top: 0; }
.category span { flex: 1; color: #000; line-height: 22px; }
.widget-list li { display: flex; align-items: center; gap: 6px; height: 24px; padding: 0 0 2px 4px; white-space: nowrap; }
.widget-list li svg { width: 22px; height: 22px; }

.splitter { display: flex; flex: none; align-items: center; width: 8px; justify-content: center; }
.splitter i { width: 1px; height: 18px; background: repeating-linear-gradient(#aaa 0 1px, transparent 1px 3px); }
.row-splitter { display: flex; flex: none; height: 8px; align-items: center; justify-content: center; }
.row-splitter i { width: 18px; height: 1px; background: repeating-linear-gradient(90deg, #aaa 0 1px, transparent 1px 3px); }

/* form canvas */
.canvas { flex: 1; min-width: 0; padding-top: 2px; background: #a0a0a0; overflow: hidden; }
.form-window {
  display: flex;
  flex-direction: column;
  width: 993px;
  height: 720px;
  border: 1px solid #707070;
  border-top-color: #999;
  border-radius: 6px 6px 0 0;
  background: #efefef;
  font-family: "DejaVu Sans", sans-serif;
  color: #343a40;
}
.form-title {
  display: flex;
  align-items: center;
  gap: 3px;
  flex: none;
  height: 28px;
  padding: 0 5px 0 7px;
  border-bottom: 1px solid #909090;
  border-radius: 5px 5px 0 0;
  background: linear-gradient(#fff, #f5f5f5 50%, #e8e8e8 50%, #efefef);
  color: #000;
  font-family: "Noto Sans", sans-serif;
}
.form-title h2 { flex: 1; text-align: center; }
.form-title button { width: 23px; height: 24px; border: 1px solid #777; border-radius: 3px; background: #fafafa; }
.dots {
  background-color: #efefef;
  background-image: conic-gradient(from 270deg at 1px 1px, #a0a0a0 90deg, transparent 0);
  background-size: 10px 10px;
}
.form-body { display: flex; flex: 1; padding: 12px 16px 12px 16px; background-position: 4px 0; }
.tab-widget { position: relative; display: flex; flex-direction: column; flex: 1; min-width: 0; }
.tabs { display: flex; gap: 4px; flex: none; height: 45px; }
.tabs button { padding: 0 24px 2px; border-radius: 8px 8px 0 0; background: #e9ecef; color: #495057; }
.tabs .current { background: #4361ee; color: #fff; }
.page { display: flex; flex-direction: column; gap: 12px; flex: 1; padding: 11px; min-height: 0; }
.layout { border: 1px solid #f77777; }
.model-row { display: flex; align-items: center; gap: 12px; height: 43px; font-weight: 700; font-size: 18px; }
.model-row input { width: 292px; height: 41px; border: 1px solid #e2e4ec; border-radius: 8px; background: #fff; margin: 0; }
.hspacer { flex: 1; min-width: 0; width: 0; border: solid #00f; border-width: 0 1px; }
.columns { display: grid; grid-template-columns: minmax(0, 1fr) 238px; gap: 12px; flex: 1; min-height: 0; }
.left-col, .right-col { display: flex; flex-direction: column; }
.layout h3, .box h3 { height: 22px; padding-left: 18px; line-height: 20px; color: #4361ee; }
.box {
  display: flex;
  flex-direction: column;
  padding: 42px 12px 12px;
  border: 1px solid #e0e2ea;
  border-radius: 8px;
  background: rgba(255, 255, 255, .7);
}
.control-box { gap: 12px; }
.start { height: 48px; border-radius: 8px; background: #4361ee; color: #fff; font-size: 23px; font-weight: 700; }
.progress { position: relative; height: 20px; }
.progress progress { display: block; width: 100%; height: 20px; border: 0; border-radius: 6px; appearance: none; background: #e9ecef; overflow: hidden; }
.progress progress::-webkit-progress-bar { background: #e9ecef; }
.progress progress::-webkit-progress-value { background: #4361ee; border-radius: 6px; }
.progress span { position: absolute; inset: 0; text-align: center; font-size: 15px; line-height: 20px; color: #212529; }
.vspacer { align-self: center; flex: 1; min-height: 0; height: 0; margin-top: 12px; border: solid #00f; border-width: 1px 0; }
.results-box { flex: 1; }
.results-box h3 { margin-top: 12px; }
.grid { width: 100%; border-collapse: separate; border-spacing: 0; border: 1px solid #f77777; table-layout: fixed; }
.grid th { padding: 0 4px 0 0; text-align: right; font-weight: 400; white-space: nowrap; border-right: 1px solid #7fbb7f; }
.grid td { padding: 0; font-weight: 700; color: #4361ee; }
.grid tr + tr > * { border-top: 1px solid #7fbb7f; }
.values { height: 169px; font-size: 18px; }
.values th { padding-right: 5px; }
.values td { width: 41px; padding-left: 5px; text-align: center; }
.values tr:first-child > * { height: 83px; padding-bottom: 4px; }
.values tr:last-child > * { padding-top: 8px; }
.tests { height: 90px; font-size: 17px; }
.tests td { width: 20px; text-align: right; }
.tests tr:first-child > * { height: 27px; padding-bottom: 6px; line-height: 20px; }
.tests tr:nth-child(2) > * { height: 32px; }
.tests tr:last-child > * { padding-top: 6px; line-height: 20px; }
.log-row { display: flex; flex-direction: column; height: 73px; font-weight: 700; }
.log-row label { height: 29px; line-height: 20px; }
.log-row textarea { flex: 1; width: 100%; border: 1px solid #e2e4ec; border-radius: 8px; resize: none; background: #fff; }
.form-status { display: flex; align-items: flex-end; justify-content: flex-end; flex: none; height: 26px; margin: 0 4px 4px 4px; padding: 2px; background: #f8f9fb; }
.handle { position: absolute; width: 6px; height: 6px; margin: -3px; border: 1px solid #00f; background: #a0a0a0; }
.top { top: 0; }
.mid-y { top: 50%; }
.bottom { top: 100%; }
.start-x { left: 0; }
.mid-x { left: 50%; }
.end-x { left: 100%; }

/* right docks */
.side { display: flex; flex-direction: column; flex: none; width: 284px; }
.inspector { display: flex; flex-direction: column; flex: none; height: 147px; }
.inspector .scroll-frame { flex: 1; min-height: 0; }
.column-head { height: 25px; padding-left: 2px; border-bottom: 1px solid #b4b4b4; background: linear-gradient(#fcfcfc, #ececec); }
.object-tree li { display: flex; align-items: center; height: 22px; padding-bottom: 1px; }
.object-tree li:nth-child(even) { background: #f7f7f7; }
.object-tree .level-3 { background: #308cc6; color: #fff; }
.arrow { margin-right: 12px; color: #555; }
.level-3 .arrow { color: #143c58; }
.icon { margin-right: 6px; margin-left: 3px; }
.object-tree .level-1 { padding-left: 8px; }
.object-tree .level-2 { padding-left: 33px; }
.object-tree .level-3 { padding-left: 58px; }
.object-tree .level-4 { padding-left: 83px; }
.level-2 .arrow, .level-4 .arrow { margin-right: 8px; }
.inspector + .row-splitter { height: 7px; }
.properties { display: flex; flex-direction: column; flex: 1; min-height: 0; }
.property-tools { display: flex; align-items: center; height: 45px; padding: 0 0 2px 4px; flex: none; }
.property-tools .filter { width: 159px; }
.property-tools button { position: relative; width: 39px; height: 34px; }
.menu-arrow { position: absolute; right: 3px; bottom: 2px; color: #444; }
.object-label { flex: none; height: 25px; padding-left: 2px; border: 1px solid #b4b4b4; line-height: 22px; }
.properties .scroll-frame { flex: 1; min-height: 0; margin-top: 1px; }
.property-table { width: 100%; table-layout: fixed; border-collapse: separate; border-spacing: 0; }
.name-col { width: 197px; }
.property-table th, .property-table td {
  height: 25px;
  padding: 0 0 0 28px;
  border-bottom: 1px solid #c0c0c0;
  overflow: hidden;
  font-weight: 400;
  line-height: 24px;
  text-align: left;
  white-space: nowrap;
}
.property-table td { padding-left: 3px; }
.property-table th:first-child:not([colspan]) { border-right: 1px solid #c0c0c0; }
.property-table thead th { padding-left: 2px; background: linear-gradient(#fcfcfc, #ececec); }
.property-table tbody tr { background: #ffffdc; }
.property-table tbody .alt { background: #ffffbf; }
.property-table tbody .peach { background: #fff0dc; }
.property-table tbody .class-row { background: #a0a0a0; color: #fff; }
.property-table .class-row th { padding-left: 23px; font-weight: 700; }
.property-table .changed { font-weight: 700; }
.property-table .sub { padding-left: 53px; }
.property-table .off { color: #c0c0c0; }
.property-table th svg { float: left; margin: 10px 0 0 -20px; color: #555; }
.property-table .class-row svg { margin-left: -18px; color: #333; }
.property-table th .closed { margin: 8px 0 0 -18px; }
.property-table input {
  display: block;
  width: 17px;
  height: 17px;
  margin: 0;
  border: 1px solid #b0b0b0;
  background: #fff;
  appearance: none;
}
.property-table input:checked::before {
  content: "";
  display: block;
  width: 6px;
  height: 11px;
  margin: 0 0 0 5px;
  border: solid #000;
  border-width: 0 2px 2px 0;
  rotate: 40deg;
}
.signals { display: flex; flex-direction: column; flex: none; height: 236px; }
.signal-tools { display: flex; align-items: center; gap: 11px; flex: 1; padding-left: 9px; }
.signal-frame { display: flex; flex-direction: column; justify-content: space-between; height: 141px; border: 1px solid #b4b4b4; background: #fff; }
.signal-table { width: 100%; table-layout: fixed; border-spacing: 0; }
.signal-table th { height: 25px; padding: 0 5px 0 2px; border: solid #b4b4b4; border-width: 0 1px 1px 0; background: linear-gradient(#fcfcfc, #ececec); font-weight: 400; text-align: left; line-height: 24px; overflow: hidden; }
.signal-table th:first-child, .signal-table th:nth-child(2) { width: 125px; }
.signal-table th:last-child { padding-right: 0; border-right: 0; }
.signal-table svg { float: right; margin-top: 9px; color: #444; }
.dock-tabs { display: flex; align-items: flex-start; height: 35px; padding-top: 1px; }
.dock-tabs button { flex: 69; height: 32px; border: 1px solid #b4b4b4; border-left: 0; border-radius: 0 0 3px 3px; background: #dcdcdc; }
.dock-tabs button:last-child { flex: 109; }
.dock-tabs .current { flex: 106; height: 34px; border: 1px solid #b4b4b4; border-top: 0; background: #f7f7f7; }
```
